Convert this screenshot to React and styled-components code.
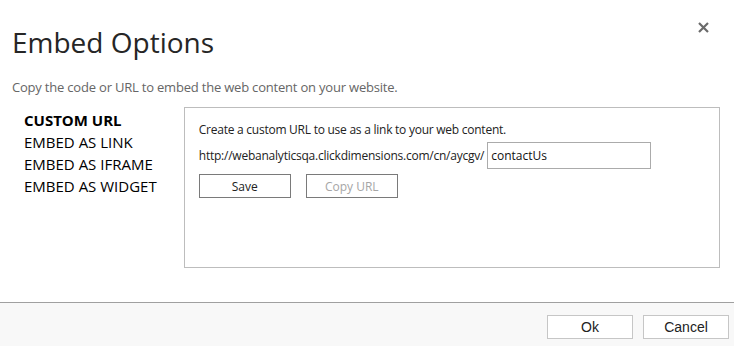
import React from "react";
import styled, { createGlobalStyle } from "styled-components";

const GlobalStyle = createGlobalStyle`
  html, body {
    margin: 0;
    padding: 0;
    background: #ffffff;
  }
  body {
    font-family: "Open Sans", "Noto Sans", sans-serif;
  }
`;

const navItems = ["CUSTOM URL", "EMBED AS LINK", "EMBED AS IFRAME", "EMBED AS WIDGET"];

const EmbedOptions = () => {
  return (
    <>
      <GlobalStyle />
      <Dialog>
        <Content>
          <CloseButton aria-label="Close">
            <svg width="11" height="11" viewBox="0 0 11 11">
              <path d="M1 1 L10 10 M10 1 L1 10" stroke="#6b6b6b" strokeWidth="2.2" />
            </svg>
          </CloseButton>
          <Title>Embed Options</Title>
          <Subtitle>Copy the code or URL to embed the web content on your website.</Subtitle>
          <Main>
            <Nav>
              {navItems.map((item, i) => (
                <NavItem key={item} active={i === 0}>
                  {item}
                </NavItem>
              ))}
            </Nav>
            <Panel>
              <Hint>Create a custom URL to use as a link to your web content.</Hint>
              <UrlRow>
                <UrlBase>http://webanalyticsqa.clickdimensions.com/cn/aycgv/</UrlBase>
                <UrlInput defaultValue="contactUs" />
              </UrlRow>
              <ButtonRow>
                <PanelButton>Save</PanelButton>
                <PanelButton disabled>Copy URL</PanelButton>
              </ButtonRow>
            </Panel>
          </Main>
        </Content>
        <Footer>
          <FooterButton>Ok</FooterButton>
          <FooterButton>Cancel</FooterButton>
        </Footer>
      </Dialog>
    </>
  );
};

const Dialog = styled.div`
  width: 734px;
  height: 346px;
  display: flex;
  flex-direction: column;
  background: #fff;
`;

const Content = styled.div`
  position: relative;
  flex: 1;
  padding: 25px 14px 0 12px;
`;

const CloseButton = styled.button`
  position: absolute;
  top: 20px;
  right: 24px;
  width: 14px;
  height: 14px;
  padding: 0;
  border: none;
  background: none;
  display: flex;
  align-items: center;
  justify-content: center;
`;

const Title = styled.h1`
  margin: 0;
  font-size: 28px;
  line-height: 34px;
  font-weight: 400;
  color: #262626;
`;

const Subtitle = styled.p`
  margin: 19px 0 0;
  font-size: 13px;
  line-height: 18px;
  letter-spacing: -0.2px;
  color: #666;
`;

const Main = styled.div`
  display: flex;
  margin-top: 11px;
`;

const Nav = styled.ul`
  list-style: none;
  margin: 0;
  padding: 2px 0 0 12px;
  width: 160px;
`;

const NavItem = styled.li`
  font-size: 15px;
  line-height: 22px;
  color: #000;
  font-weight: ${(p) => (p.active ? 700 : 400)};
`;

const Panel = styled.div`
  width: 507px;
  height: 145px;
  border: 1px solid #bdbdbd;
  padding: 14px 14px 0;
`;

const Hint = styled.div`
  font-size: 12px;
  line-height: 16px;
  letter-spacing: -0.25px;
  color: #222;
`;

const UrlRow = styled.div`
  display: flex;
  align-items: center;
  gap: 3px;
  margin-top: 4px;
`;

const UrlBase = styled.span`
  font-size: 12px;
  letter-spacing: -0.23px;
  color: #222;
`;

const UrlInput = styled.input`
  width: 164px;
  box-sizing: border-box;
  height: 27px;
  padding: 0 3px;
  border: 1px solid #ababab;
  font-family: inherit;
  font-size: 12px;
  color: #111;
  outline: none;
`;

const ButtonRow = styled.div`
  display: flex;
  gap: 15px;
  margin-top: 5px;
`;

const PanelButton = styled.button`
  width: 92px;
  height: 24px;
  border: 1px solid #7a7a7a;
  background: #fff;
  font-family: inherit;
  font-size: 12px;
  color: ${(p) => (p.disabled ? "#a6a6a6" : "#222")};
  padding: 0;
`;

const Footer = styled.div`
  box-sizing: border-box;
  height: 44px;
  border-top: 1px solid #a0a0a0;
  background: #f8f8f8;
  display: flex;
  justify-content: flex-end;
  gap: 10px;
  padding: 12px 5px 0 0;
`;

const FooterButton = styled.button`
  width: 86px;
  height: 24px;
  border: 1px solid #c6c6c6;
  background: #fff;
  font-family: "Liberation Sans", Arial, sans-serif;
  font-size: 14px;
  color: #222;
  padding: 0;
`;

export default EmbedOptions;
